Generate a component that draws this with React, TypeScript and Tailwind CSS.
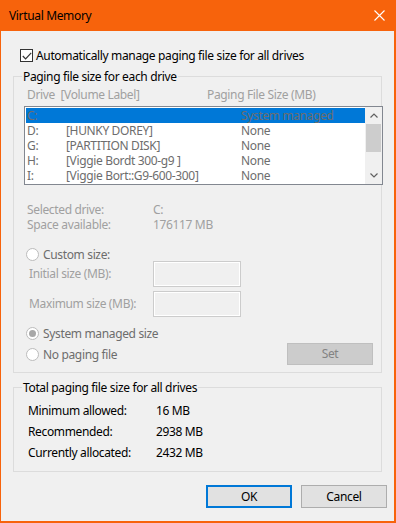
import React from 'react';

const drives = [
  { letter: 'C:', label: '', size: 'System managed' },
  { letter: 'D:', label: '[HUNKY DOREY]', size: 'None' },
  { letter: 'G:', label: '[PARTITION DISK]', size: 'None' },
  { letter: 'H:', label: '[Viggie Bordt 300-g9 ]', size: 'None' },
  { letter: 'I:', label: '[Viggie Bort::G9-600-300]', size: 'None' },
];

const totals = [
  { label: 'Minimum allowed:', value: '16 MB' },
  { label: 'Recommended:', value: '2938 MB' },
  { label: 'Currently allocated:', value: '2432 MB' },
];

const Radio = ({ checked }: { checked?: boolean }) => (
  <span className="w-[13px] h-[13px] rounded-full border border-[#bcbcbc] bg-white flex items-center justify-center shrink-0">
    {checked && <span className="w-[7px] h-[7px] rounded-full bg-[#a8a8a8]" />}
  </span>
);

const GroupBox = ({ title, className, children }: { title: string; className: string; children: React.ReactNode }) => (
  <div className={`relative border border-[#dcdcdc] ${className}`}>
    <span className="absolute -top-[8px] left-[8px] px-[1px] bg-[#f0f0f0] text-black leading-[16px]">{title}</span>
    {children}
  </div>
);

const App: React.FC = () => {
  return (
    <div
      className="w-[396px] h-[523px] bg-[#f0f0f0] border-l border-r-2 border-b-2 border-[#f7630c] flex flex-col text-[12px] tracking-[-0.35px] text-black"
      style={{ fontFamily: '"Noto Sans", "Open Sans", sans-serif' }}
    >
      {/* Title bar */}
      <div className="h-[31px] bg-[#f7630c] flex items-center justify-between pl-[8px] pr-[9px] shrink-0">
        <span className="text-[12px] leading-[16px] text-black">Virtual Memory</span>
        <svg width="11" height="11" viewBox="0 0 11 11" className="mb-[1px]">
          <path d="M0.5 0.5 L10.5 10.5 M10.5 0.5 L0.5 10.5" stroke="#ffffff" strokeWidth="1.1" />
        </svg>
      </div>

      <div className="flex flex-col pl-[12px] pr-[12px]">
        {/* Auto manage checkbox */}
        <div className="flex items-center gap-[3px] mt-[18px] pl-[7px] h-[13px]">
          <span className="w-[13px] h-[13px] border border-[#333333] bg-white flex items-center justify-center shrink-0">
            <svg width="10" height="8" viewBox="0 0 10 8">
              <path d="M0.8 4 L3.6 6.8 L9.2 0.8" fill="none" stroke="#333333" strokeWidth="1.2" />
            </svg>
          </span>
          <span className="leading-[16px]">Automatically manage paging file size for all drives</span>
        </div>

        {/* Paging file size for each drive */}
        <GroupBox title="Paging file size for each drive" className="mt-[14px] h-[297px] w-[369px] pl-[10px]">
          <div className="flex h-[16px] mt-[10px] text-[#a0a0a0] leading-[16px] pl-[3px]">
            <span className="w-[180px]">Drive&nbsp; [Volume Label]</span>
            <span>Paging File Size (MB)</span>
          </div>

          <div className="mt-[3px] w-[359px] h-[79px] border border-[#828790] bg-white flex">
            <div className="flex-1 pt-[1px] pl-[1px]">
              {drives.map((d, i) => (
                <div
                  key={d.letter}
                  className={`flex h-[15px] leading-[15px] text-[#6d6d6d] pl-[1px] ${i === 0 ? 'bg-[#0078d7]' : ''}`}
                >
                  <span className="w-[39px]">{d.letter}</span>
                  <span className="w-[175px]">{d.label}</span>
                  <span>{d.size}</span>
                </div>
              ))}
            </div>
            <div className="w-[17px] bg-[#f0f0f0] flex flex-col items-center">
              <div className="h-[17px] flex items-center justify-center">
                <svg width="8" height="5" viewBox="0 0 8 5">
                  <path d="M0.5 4.5 L4 1 L7.5 4.5" fill="none" stroke="#606060" strokeWidth="1.2" />
                </svg>
              </div>
              <div className="w-[15px] h-[28px] bg-[#cdcdcd]" />
              <div className="flex-1" />
              <div className="h-[17px] flex items-center justify-center">
                <svg width="8" height="5" viewBox="0 0 8 5">
                  <path d="M0.5 0.5 L4 4 L7.5 0.5" fill="none" stroke="#606060" strokeWidth="1.2" />
                </svg>
              </div>
            </div>
          </div>

          <div className="mt-[17px] flex flex-col text-[#a0a0a0] pl-[3px]">
            <div className="flex h-[15px] leading-[15px]">
              <span className="w-[126px]">Selected drive:</span>
              <span>C:</span>
            </div>
            <div className="flex h-[15px] leading-[15px]">
              <span className="w-[126px]">Space available:</span>
              <span>176117 MB</span>
            </div>
          </div>

          <div className="mt-[15px] flex items-center gap-[4px] h-[14px] pl-[2px] text-[#6d6d6d]">
            <Radio />
            <span className="leading-[15px]">Custom size:</span>
          </div>

          <div className="mt-[0px] flex items-center h-[26px] pl-[5px] text-[#a0a0a0]">
            <span className="w-[124px]">Initial size (MB):</span>
            <span className="w-[88px] h-[26px] border border-[#cccccc] bg-[#f0f0f0] shadow-[inset_0_0_0_1px_#ffffff]" />
          </div>
          <div className="mt-[4px] flex items-center h-[26px] pl-[5px] text-[#a0a0a0]">
            <span className="w-[124px]">Maximum size (MB):</span>
            <span className="w-[88px] h-[26px] border border-[#cccccc] bg-[#f0f0f0] shadow-[inset_0_0_0_1px_#ffffff]" />
          </div>

          <div className="mt-[9px] flex items-center gap-[4px] h-[15px] pl-[2px] text-[#6d6d6d]">
            <Radio checked />
            <span className="leading-[15px]">System managed size</span>
          </div>

          <div className="mt-[2px] flex items-center h-[22px] pl-[2px] text-[#6d6d6d]">
            <div className="flex items-center gap-[4px] flex-1">
              <Radio />
              <span className="leading-[15px]">No paging file</span>
            </div>
            <div className="w-[86px] h-[22px] mr-[8px] bg-[#cccccc] border border-[#bfbfbf] flex items-center justify-center text-[#838383]">
              Set
            </div>
          </div>
        </GroupBox>

        {/* Totals */}
        <GroupBox title="Total paging file size for all drives" className="mt-[14px] h-[85px] w-[369px] pl-[14px] pt-[12px]">
          {totals.map((t) => (
            <div key={t.label} className="flex h-[21px] leading-[21px]">
              <span className="w-[128px]">{t.label}</span>
              <span>{t.value}</span>
            </div>
          ))}
        </GroupBox>

        {/* Buttons */}
        <div className="flex justify-end gap-[9px] mt-[13px] mr-[-5px]">
          <button className="w-[86px] h-[23px] bg-[#e1e1e1] border-2 border-[#0078d7] text-black">OK</button>
          <button className="w-[86px] h-[23px] bg-[#e1e1e1] border border-[#adadad] text-black">Cancel</button>
        </div>
      </div>
    </div>
  );
};

export default App;
